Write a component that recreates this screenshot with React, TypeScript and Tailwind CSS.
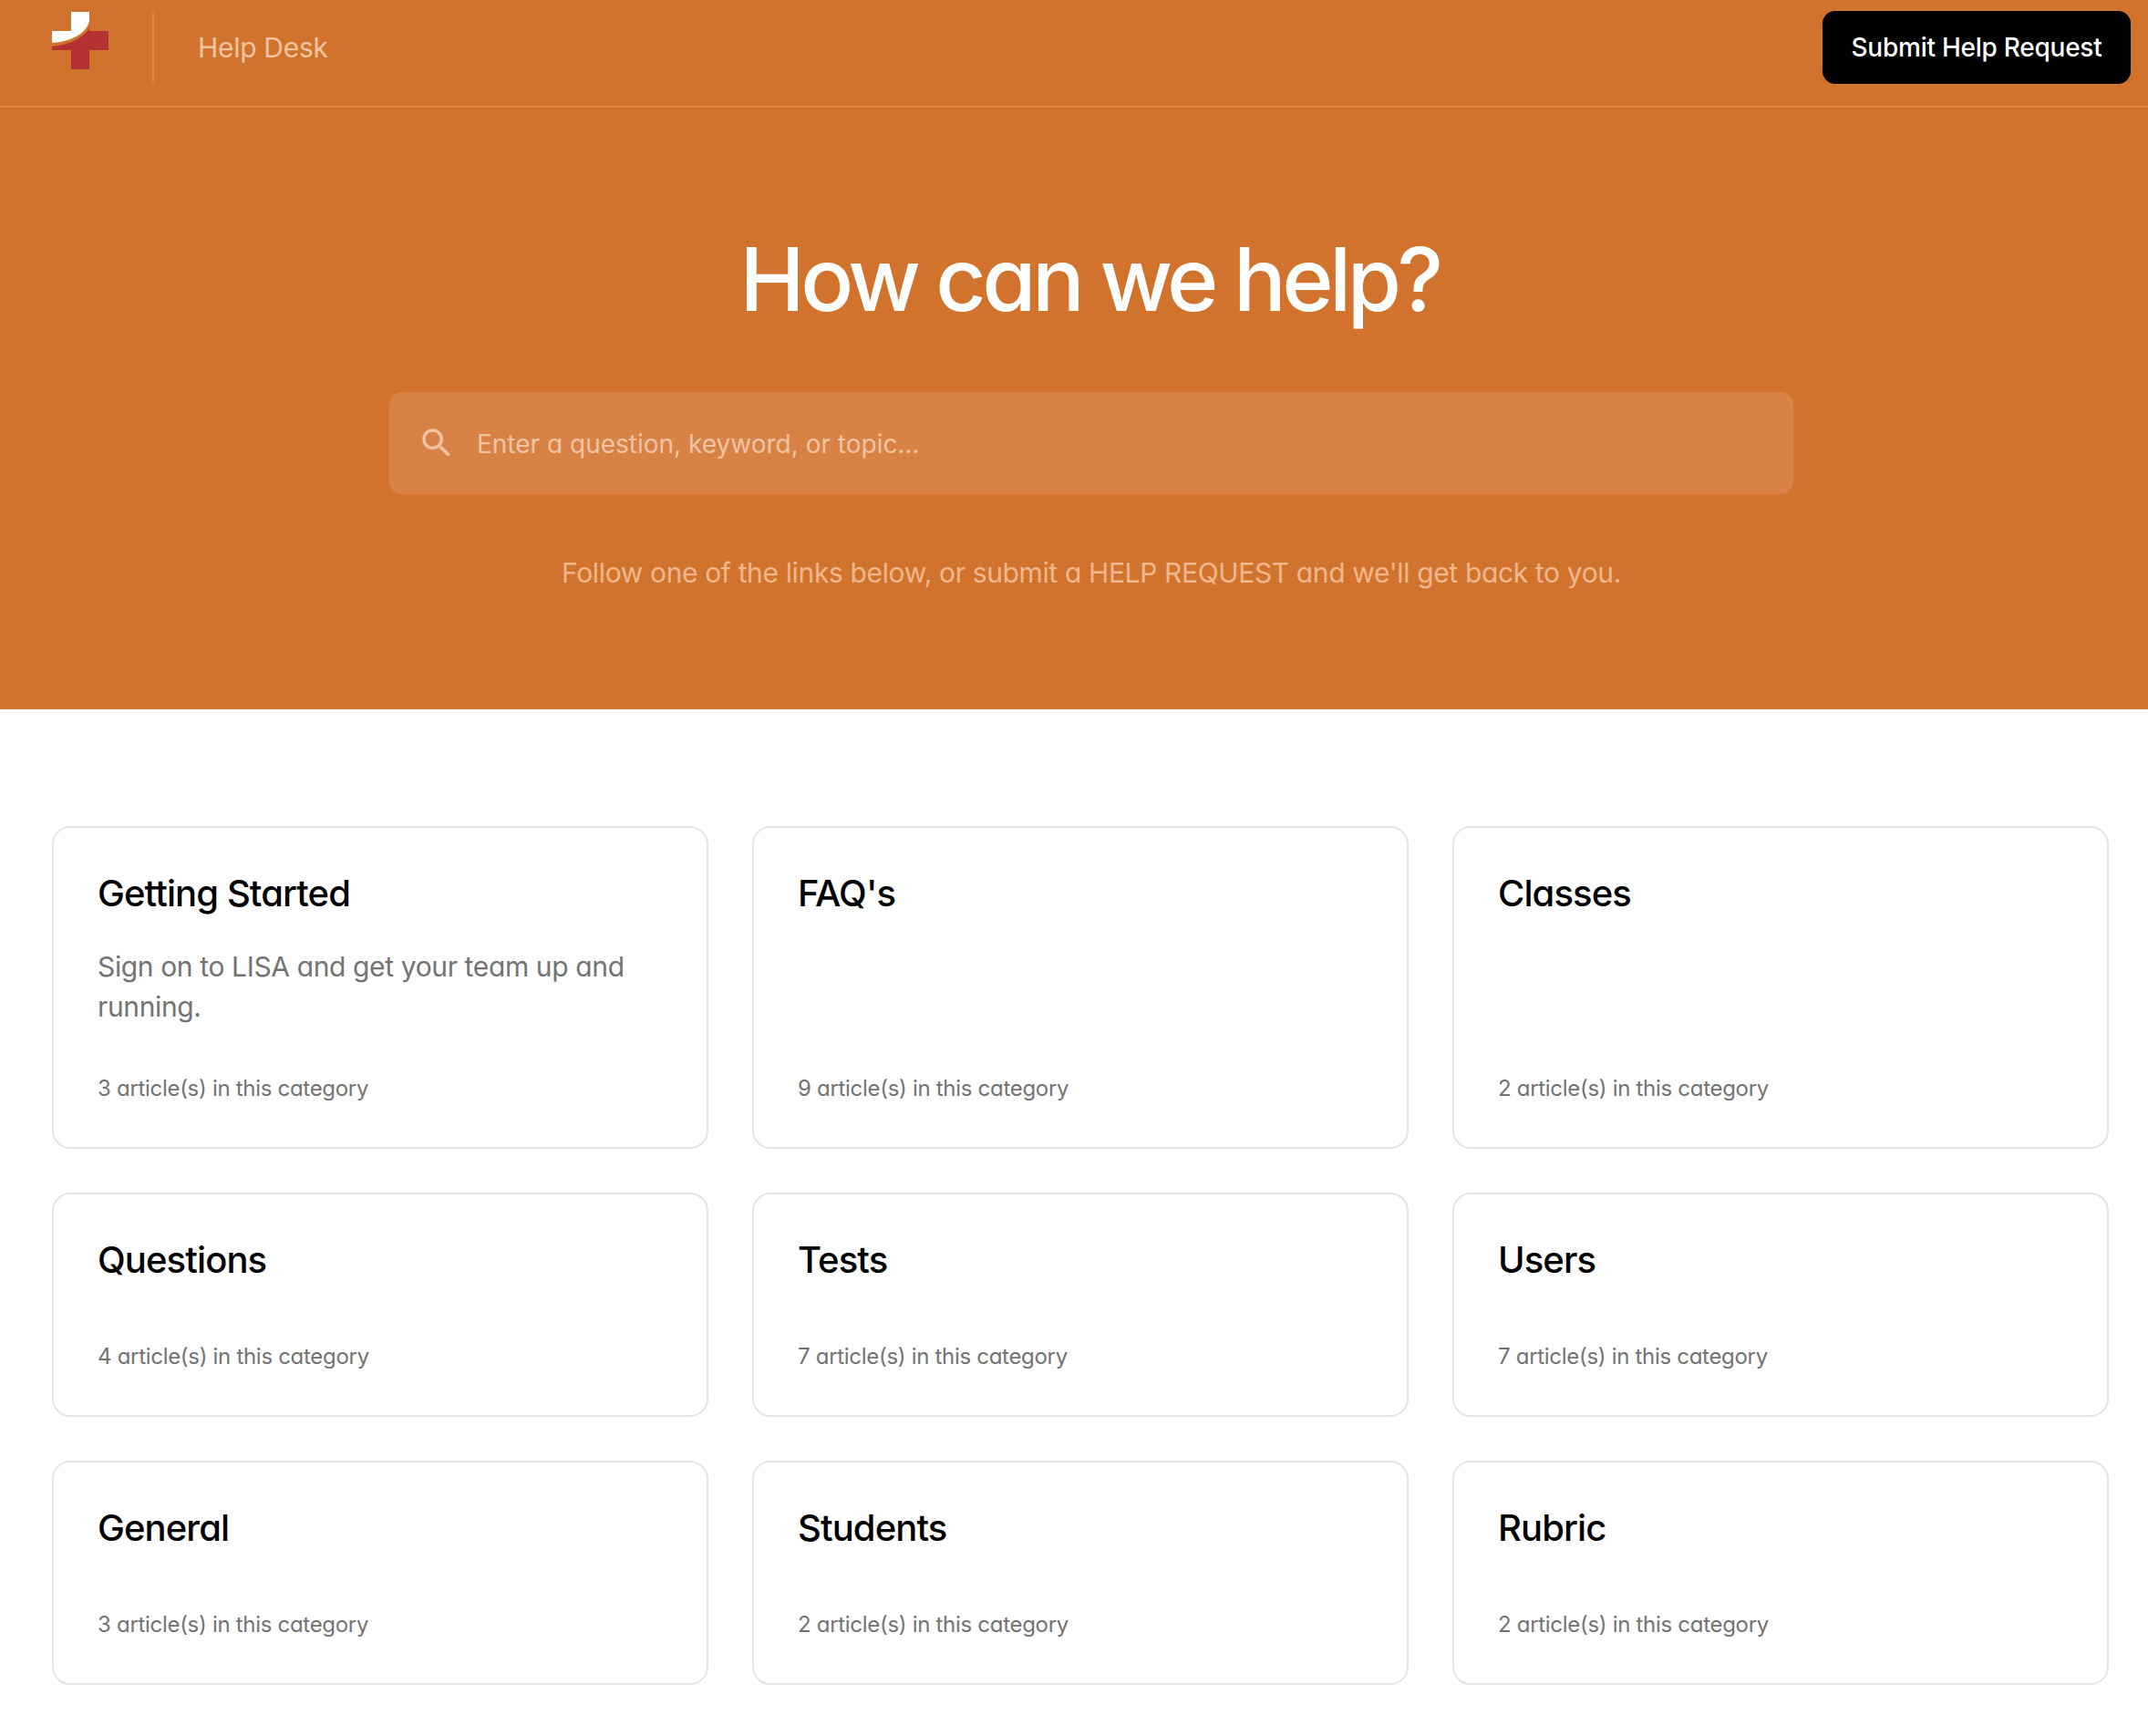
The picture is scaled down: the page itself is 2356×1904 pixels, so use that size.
import { MdSearch } from "react-icons/md"

const categories = [
  { title: "Getting Started", text: "Sign on to LISA and get your team up and running.", count: 3 },
  { title: "FAQ's", text: "", count: 9 },
  { title: "Classes", text: "", count: 2 },
  { title: "Questions", count: 4 },
  { title: "Tests", count: 7 },
  { title: "Users", count: 7 },
  { title: "General", count: 3 },
  { title: "Students", count: 2 },
  { title: "Rubric", count: 2 },
]

function Logo() {
  return (
    <svg width="62" height="63" viewBox="0 0 62 63" className="mt-[1px] shrink-0">
      <path d="M0 42V38C20 36 36 28 41 17V21H62V42H41V63H21V42Z" fill="#b43232" />
      <path d="M21 0H41V10C38 24 20 33 0 34V21H21Z" fill="#ffffff" />
    </svg>
  )
}

function CategoryCard({ title, text, count }: { title: string; text?: string; count: number }) {
  return (
    <div className="flex flex-col rounded-[20px] border-2 border-[#e5e5e5] bg-white px-[48px] pt-[45px] pb-[46px]">
      <h3 className="text-[40px] leading-[54px] font-medium tracking-[-0.9px] text-black">{title}</h3>
      {text !== undefined ? (
        <>
          <p className="mt-[31px] h-[88px] text-[30px] leading-[44px] tracking-[-0.37px] text-[#737373]">{text}</p>
          <p className="mt-[50px] text-[24px] leading-[36px] tracking-[-0.3px] text-[#737373]">
            {count} article(s) in this category
          </p>
        </>
      ) : (
        <p className="mt-[61px] text-[24px] leading-[36px] tracking-[-0.3px] text-[#737373]">
          {count} article(s) in this category
        </p>
      )}
    </div>
  )
}

export default function App() {
  return (
    <div className="min-h-[1904px] bg-white font-['Inter',sans-serif] [font-feature-settings:'cv11']">
      <header className="flex h-[118px] items-start justify-between border-b-2 border-[#db8344] bg-[#d1732c] pt-[12px] pr-[19px] pl-[57px]">
        <div className="flex items-start">
          <Logo />
          <div className="ml-[48px] h-[80px] w-[2px] bg-[#da8342]" />
          <span className="ml-[48px] text-[30px] leading-[80px] tracking-[-0.3px] text-[#f0c4a3]">Help Desk</span>
        </div>
        <button className="h-[80px] w-[338px] rounded-[14px] bg-black text-[28px] font-medium tracking-[-0.25px] text-white">
          Submit Help Request
        </button>
      </header>

      <section className="flex h-[660px] flex-col items-center bg-[#d1732c] pl-[38px]">
        <h1 className="mt-[128px] mr-[4px] text-[96px] leading-[120px] font-[450] tracking-[-4.5px] text-white">How can we help?</h1>
        <div className="mt-[64px] flex h-[112px] w-[1540px] items-center rounded-[14px] bg-[#d88246] pl-[31px]">
          <MdSearch className="h-[42px] w-[42px] text-[#f0c4a3]" />
          <span className="ml-[23px] translate-y-[1px] text-[28px] text-[#f0c4a3]">Enter a question, keyword, or topic...</span>
        </div>
        <p className="mt-[64px] text-[30px] leading-[44px] tracking-[-0.36px] text-[#f0b78f]">
          Follow one of the links below, or submit a HELP REQUEST and we'll get back to you.
        </p>
      </section>

      <main className="grid grid-cols-3 gap-[48px] pt-[128px] pr-[43px] pl-[57px]">
        {categories.map((c) => (
          <CategoryCard key={c.title} title={c.title} text={c.text} count={c.count} />
        ))}
      </main>
    </div>
  )
}
